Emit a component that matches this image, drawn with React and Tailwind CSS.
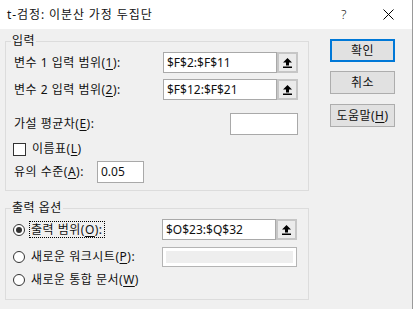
import React from "react";

const UpArrow = () => (
  <svg width="9" height="10" viewBox="0 0 9 10">
    <path d="M4.5 0 L9 4.5 H6 V7.5 H3 V4.5 H0 Z" fill="#000" />
    <rect x="0" y="8.5" width="9" height="1.5" fill="#000" />
  </svg>
);

// 참조 입력칸 + 축소 버튼
const RefInput = ({ value }) => (
  <div className="flex h-[21px] w-[135px] tracking-normal">
    <div className="w-[114px] h-full border border-[#a9a9a9] bg-white px-[3px] flex items-center leading-none">
      {value}
    </div>
    <div className="w-[21px] h-full border-2 border-[#c6c6c6] bg-[#ebebeb] flex items-center justify-center">
      <UpArrow />
    </div>
  </div>
);

const Key = ({ children }) => <span className="underline underline-offset-2">{children}</span>;

const Radio = ({ checked }) => (
  <div className="w-[12px] h-[12px] rounded-full border border-[#333] bg-white flex items-center justify-center shrink-0">
    {checked && <div className="w-[6px] h-[6px] rounded-full bg-[#333]" />}
  </div>
);

const Button = ({ children, primary, className = "" }) => (
  <div
    className={
      "w-[65px] h-[23px] bg-[#e1e1e1] flex items-center justify-center leading-none " +
      (primary ? "border-2 border-[#0078d7] " : "border border-[#adadad] ") +
      className
    }
  >
    {children}
  </div>
);

export default function App() {
  return (
    <div className="w-[414px] h-[309px] flex bg-white overflow-hidden text-[12px] tracking-[0.5px] text-[#111] font-['Noto_Sans','Noto_Sans_CJK_KR',sans-serif]">
      <div className="w-[412px] flex flex-col bg-[#f0f0f0]">
        {/* 제목 표시줄 */}
        <div className="h-[29px] bg-white flex items-center pl-[7px] pr-[18px] shrink-0">
          <span className="flex-1 leading-none pt-[1px] tracking-[0.9px]">t-검정: 이분산 가정 두집단</span>
          <span className="leading-none text-[13px] font-light mr-[36px]">?</span>
          <svg width="11" height="11" viewBox="0 0 11 11">
            <path d="M0.5 0.5 L10.5 10.5 M10.5 0.5 L0.5 10.5" stroke="#000" strokeWidth="1" />
          </svg>
        </div>

        <div className="flex flex-1 pl-[5px]">
          <div className="w-[304px] pt-[4px]">
            {/* 입력 */}
            <fieldset className="border border-[#dcdcdc] pl-[8px] pr-[10px] pb-[7px]">
              <legend className="ml-[-3px] px-[1px] leading-[16px]">입력</legend>
              <div className="flex items-center h-[21px] mt-[3px]">
                <span className="w-[149px]">변수 1 입력 범위(<Key>1</Key>):</span>
                <RefInput value="$F$2:$F$11" />
              </div>
              <div className="flex items-center h-[21px] mt-[6px]">
                <span className="w-[149px]">변수 2 입력 범위(<Key>2</Key>):</span>
                <RefInput value="$F$12:$F$21" />
              </div>
              <div className="flex items-center h-[22px] mt-[13px]">
                <span className="flex-1">가설 평균차(<Key>E</Key>):</span>
                <div className="w-[68px] h-full border border-[#a9a9a9] bg-white" />
              </div>
              <div className="flex items-center h-[16px] mt-[6px]">
                <div className="w-[13px] h-[13px] -ml-[1px] border border-[#333] bg-white" />
                <span className="ml-[6px]">이름표(<Key>L</Key>)</span>
              </div>
              <div className="flex items-center h-[22px] mt-[4px]">
                <span className="w-[83px]">유의 수준(<Key>A</Key>):</span>
                <div className="w-[47px] h-full border border-[#a9a9a9] bg-white px-[3px] flex items-center leading-none tracking-normal">
                  0.05
                </div>
              </div>
            </fieldset>

            {/* 출력 옵션 */}
            <fieldset className="mt-[9px] border border-[#dcdcdc] pl-[8px] pr-[10px] pb-[11px]">
              <legend className="ml-[-3px] px-[1px] leading-[16px]">출력 옵션</legend>
              <div className="flex items-center h-[21px] mt-[3px]">
                <div className="w-[149px] flex items-center -ml-[1px]">
                  <Radio checked />
                  <span className="ml-[4px] border border-dotted border-black px-[1px] h-[17px] flex items-center">
                    출력 범위(<Key>O</Key>):
                  </span>
                </div>
                <RefInput value="$O$23:$Q$32" />
              </div>
              <div className="flex items-center h-[20px] mt-[7px]">
                <div className="w-[149px] flex items-center -ml-[1px]">
                  <Radio />
                  <span className="ml-[4px] border border-transparent px-[1px]">
                    새로운 워크시트(<Key>P</Key>):
                  </span>
                </div>
                <div className="w-[135px] h-full border border-[#b4b4b4] bg-white p-[3px]">
                  <div className="w-full h-full bg-[#eeeeee]" />
                </div>
              </div>
              <div className="flex items-center h-[16px] mt-[5px]">
                <div className="flex items-center -ml-[1px]">
                  <Radio />
                  <span className="ml-[4px] border border-transparent px-[1px]">
                    새로운 통합 문서(<Key>W</Key>)
                  </span>
                </div>
              </div>
            </fieldset>
          </div>

          {/* 버튼 */}
          <div className="ml-[21px] pt-[10px] flex flex-col">
            <Button primary>확인</Button>
            <Button className="mt-[9px]">취소</Button>
            <Button className="mt-[10px]">
              <span>도움말(<Key>H</Key>)</span>
            </Button>
          </div>
        </div>
      </div>
      <div className="w-[1px] h-full bg-[#9a9a9a]" />
      <div className="w-[1px] h-full bg-white" />
    </div>
  );
}
